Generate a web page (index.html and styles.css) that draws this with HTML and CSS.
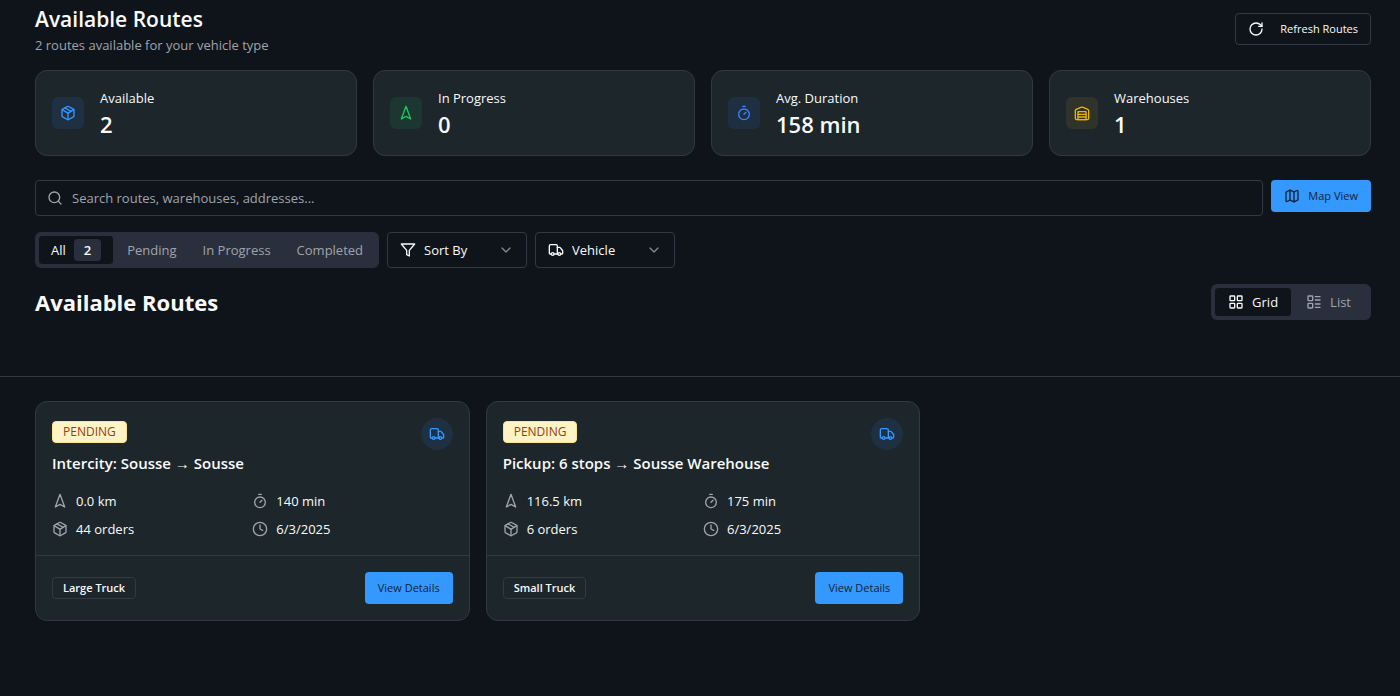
FILE: index.html
```html
<!DOCTYPE html>
<html lang="en">
<head>
<meta charset="utf-8">
<meta name="viewport" content="width=device-width, initial-scale=1">
<title>Available Routes</title>
<link rel="stylesheet" href="styles.css">
</head>
<body>
<svg class="sprite" aria-hidden="true">
  <symbol id="package" viewBox="0 0 24 24"><path d="M11 21.73a2 2 0 0 0 2 0l7-4A2 2 0 0 0 21 16V8a2 2 0 0 0-1-1.73l-7-4a2 2 0 0 0-2 0l-7 4A2 2 0 0 0 3 8v8a2 2 0 0 0 1 1.73z"/><path d="M12 22V12"/><path d="m3.3 7 7.703 4.734a2 2 0 0 0 1.994 0L20.7 7"/><path d="m7.5 4.27 9 5.15"/></symbol>
  <symbol id="navigation" viewBox="0 0 24 24"><path d="M12 2l7 19-7-4-7 4z"/></symbol>
  <symbol id="timer" viewBox="0 0 24 24"><path d="M10 2h4"/><path d="M12 14l3-3"/><circle cx="12" cy="14" r="8"/></symbol>
  <symbol id="clock" viewBox="0 0 24 24"><circle cx="12" cy="12" r="10"/><path d="M12 6v6l4 2"/></symbol>
  <symbol id="warehouse" viewBox="0 0 24 24"><path d="M22 8.35V20a2 2 0 0 1-2 2H4a2 2 0 0 1-2-2V8.35A2 2 0 0 1 3.26 6.5l8-3.2a2 2 0 0 1 1.48 0l8 3.2A2 2 0 0 1 22 8.35Z"/><path d="M6 18h12"/><path d="M6 14h12"/><rect width="12" height="12" x="6" y="10"/></symbol>
  <symbol id="refresh" viewBox="0 0 24 24"><path d="M21 12a9 9 0 1 1-9-9c2.52 0 4.93 1 6.74 2.74L21 8"/><path d="M21 3v5h-5"/></symbol>
  <symbol id="search" viewBox="0 0 24 24"><circle cx="11" cy="11" r="8"/><path d="m21 21-4.3-4.3"/></symbol>
  <symbol id="map" viewBox="0 0 24 24"><path d="M14.106 5.553a2 2 0 0 0 1.788 0l3.659-1.83A1 1 0 0 1 21 4.619v12.764a1 1 0 0 1-.553.894l-4.553 2.277a2 2 0 0 1-1.788 0l-4.212-2.106a2 2 0 0 0-1.788 0l-3.659 1.83A1 1 0 0 1 3 19.381V6.618a1 1 0 0 1 .553-.894l4.553-2.277a2 2 0 0 1 1.788 0z"/><path d="M15 5.764v15"/><path d="M9 3.236v15"/></symbol>
  <symbol id="filter" viewBox="0 0 24 24"><path d="M22 3H2l8 9.46V19l4 2v-8.54z"/></symbol>
  <symbol id="truck" viewBox="0 0 24 24"><path d="M14 18V6a2 2 0 0 0-2-2H4a2 2 0 0 0-2 2v11a1 1 0 0 0 1 1h2"/><path d="M15 18H9"/><path d="M19 18h2a1 1 0 0 0 1-1v-3.65a1 1 0 0 0-.22-.624l-3.48-4.35A1 1 0 0 0 17.52 8H14"/><circle cx="17" cy="18" r="2"/><circle cx="7" cy="18" r="2"/></symbol>
  <symbol id="chevron" viewBox="0 0 24 24"><path d="m6 9 6 6 6-6"/></symbol>
  <symbol id="grid" viewBox="0 0 24 24"><rect width="7" height="7" x="3" y="3" rx="1"/><rect width="7" height="7" x="14" y="3" rx="1"/><rect width="7" height="7" x="14" y="14" rx="1"/><rect width="7" height="7" x="3" y="14" rx="1"/></symbol>
  <symbol id="list" viewBox="0 0 24 24"><rect width="7" height="7" x="3" y="3" rx="1"/><rect width="7" height="7" x="3" y="14" rx="1"/><path d="M14 4h7"/><path d="M14 9h7"/><path d="M14 15h7"/><path d="M14 20h7"/></symbol>
</svg>

<header class="page-head">
  <div class="title-row">
    <div>
      <h1 class="page-title">Available Routes</h1>
      <p class="subtitle">2 routes available for your vehicle type</p>
    </div>
    <button class="btn btn-outline" type="button"><svg class="icon"><use href="#refresh"/></svg>Refresh Routes</button>
  </div>

  <section class="stats" aria-label="Route statistics">
    <div class="card stat">
      <span class="stat-icon blue"><svg class="icon"><use href="#package"/></svg></span>
      <div><p class="stat-label">Available</p><p class="stat-value">2</p></div>
    </div>
    <div class="card stat">
      <span class="stat-icon green"><svg class="icon"><use href="#navigation"/></svg></span>
      <div><p class="stat-label">In Progress</p><p class="stat-value">0</p></div>
    </div>
    <div class="card stat">
      <span class="stat-icon indigo"><svg class="icon"><use href="#timer"/></svg></span>
      <div><p class="stat-label">Avg. Duration</p><p class="stat-value">158 min</p></div>
    </div>
    <div class="card stat">
      <span class="stat-icon yellow"><svg class="icon"><use href="#warehouse"/></svg></span>
      <div><p class="stat-label">Warehouses</p><p class="stat-value">1</p></div>
    </div>
  </section>

  <div class="search-row">
    <label class="search"><svg class="icon"><use href="#search"/></svg><input class="search-input" type="text" aria-label="Search routes" placeholder="Search routes, warehouses, addresses..."></label>
    <button class="btn btn-primary btn-map" type="button"><svg class="icon"><use href="#map"/></svg>Map View</button>
  </div>

  <div class="filters">
    <div class="tabs" role="tablist" aria-label="Status">
      <button class="tab active" type="button" role="tab" aria-selected="true">All<span class="count">2</span></button>
      <button class="tab" type="button" role="tab">Pending</button>
      <button class="tab" type="button" role="tab">In Progress</button>
      <button class="tab" type="button" role="tab">Completed</button>
    </div>
    <label class="picker"><svg class="icon"><use href="#filter"/></svg><select class="picker-select" aria-label="Sort by"><option>Sort By</option></select><svg class="icon chevron"><use href="#chevron"/></svg></label>
    <label class="picker"><svg class="icon"><use href="#truck"/></svg><select class="picker-select" aria-label="Vehicle"><option>Vehicle</option></select><svg class="icon chevron"><use href="#chevron"/></svg></label>
  </div>

  <div class="section-row">
    <h2 class="section-title">Available Routes</h2>
    <div class="tabs view-tabs" role="tablist" aria-label="Layout">
      <button class="tab active" type="button" role="tab" aria-selected="true"><svg class="icon"><use href="#grid"/></svg>Grid</button>
      <button class="tab" type="button" role="tab"><svg class="icon"><use href="#list"/></svg>List</button>
    </div>
  </div>
</header>

<main class="routes">
  <article class="card route">
    <div class="route-head">
      <div>
        <span class="status">PENDING</span>
        <h3 class="route-title">Intercity: Sousse → Sousse</h3>
      </div>
      <span class="route-icon"><svg class="icon"><use href="#truck"/></svg></span>
    </div>
    <ul class="facts">
      <li class="fact"><svg class="icon"><use href="#navigation"/></svg>0.0 km</li>
      <li class="fact"><svg class="icon"><use href="#timer"/></svg>140 min</li>
      <li class="fact"><svg class="icon"><use href="#package"/></svg>44 orders</li>
      <li class="fact"><svg class="icon"><use href="#clock"/></svg>6/3/2025</li>
    </ul>
    <div class="route-foot"><span class="vehicle">Large Truck</span><button class="btn btn-primary" type="button">View Details</button></div>
  </article>
  <article class="card route">
    <div class="route-head">
      <div>
        <span class="status">PENDING</span>
        <h3 class="route-title">Pickup: 6 stops → Sousse Warehouse</h3>
      </div>
      <span class="route-icon"><svg class="icon"><use href="#truck"/></svg></span>
    </div>
    <ul class="facts">
      <li class="fact"><svg class="icon"><use href="#navigation"/></svg>116.5 km</li>
      <li class="fact"><svg class="icon"><use href="#timer"/></svg>175 min</li>
      <li class="fact"><svg class="icon"><use href="#package"/></svg>6 orders</li>
      <li class="fact"><svg class="icon"><use href="#clock"/></svg>6/3/2025</li>
    </ul>
    <div class="route-foot"><span class="vehicle">Small Truck</span><button class="btn btn-primary" type="button">View Details</button></div>
  </article>
</main>
</body>
</html>
```
FILE: styles.css
```css
:root {
  --bg: #0f141b;
  --card: #1c262b;
  --line: #323846;
  --muted: #2a2f3d;
  --muted-text: #a0a4ab;
  --text: #fafafa;
  --primary: #3399ff;
}

* { box-sizing: border-box; margin: 0; padding: 0; }

body {
  min-height: 100vh;
  background: var(--bg);
  color: var(--text);
  font: 13px/20px "Segoe UI", "Open Sans", "Noto Sans", sans-serif;
}

button, input, select { font: inherit; color: inherit; }
button { cursor: pointer; border: 0; background: none; }

.sprite { display: none; }

.icon {
  flex: none;
  width: 16px;
  height: 16px;
  fill: none;
  stroke: currentColor;
  stroke-width: 2;
  stroke-linecap: round;
  stroke-linejoin: round;
}

.page-head {
  display: flex;
  flex-direction: column;
  gap: 16px;
  padding: 3px 29px 56px 35px;
  border-bottom: 1px solid var(--line);
}

.title-row, .section-row {
  display: flex;
  align-items: center;
  justify-content: space-between;
}

.title-row { margin-bottom: -1px; }
.page-title { font-size: 21px; line-height: 32px; font-weight: 600; }
.subtitle { color: var(--muted-text); }

.btn {
  display: inline-flex;
  align-items: center;
  justify-content: center;
  height: 32px;
  padding: 0 13px;
  border-radius: 4px;
  font-size: 11px;
  font-weight: 400;
  white-space: nowrap;
}

.btn-outline { gap: 16px; padding: 0 12px; border: 1px solid var(--line); }
.btn-primary { background: var(--primary); color: #142235; }
.btn-map { gap: 8px; }

.card {
  background: var(--card);
  border: 1px solid var(--line);
  border-radius: 12px;
}

.stats {
  display: grid;
  grid-template-columns: repeat(4, 1fr);
  gap: 16px;
  margin-bottom: 8px;
}

.stat { display: flex; align-items: center; gap: 16px; padding: 16px; }
.stat-icon { display: flex; padding: 8px; border-radius: 6px; }
.stat-label { line-height: 22px; }
.stat-value { font-size: 22px; line-height: 30px; font-weight: 600; }
.blue { color: #3399ff; background: #1f3042; }
.green { color: #22c55e; background: #1c3631; }
.indigo { color: #3b82f6; background: #1f2f41; }
.yellow { color: #eab308; background: #303329; }

.search-row { display: flex; gap: 8px; align-items: flex-start; }

.search {
  flex: 1;
  display: flex;
  align-items: center;
  gap: 9px;
  height: 36px;
  padding: 0 11px;
  border: 1px solid var(--line);
  border-radius: 4px;
  color: var(--muted-text);
}

.search-input { flex: 1; min-width: 0; border: 0; outline: 0; background: none; color: var(--text); }
.search-input::placeholder { color: var(--muted-text); opacity: 1; }

.filters { display: flex; gap: 8px; }

.tabs {
  display: flex;
  padding: 3px;
  height: 36px;
  background: var(--muted);
  border-radius: 6px;
  color: var(--muted-text);
}

.tab {
  display: flex;
  align-items: center;
  gap: 8px;
  padding: 0 12px;
  border: 1px solid transparent;
  border-radius: 4px;
}

.tab.active { background: var(--bg); border-color: var(--muted); color: var(--text); }
.view-tabs .tab { padding: 0 13px; }
.view-tabs .tab:last-child { padding-right: 16px; }

.count {
  padding: 0 10px;
  line-height: 22px;
  border-radius: 4px;
  background: var(--muted);
  font-size: 13px;
  font-weight: 600;
}

.picker {
  display: flex;
  align-items: center;
  gap: 8px;
  width: 140px;
  height: 36px;
  padding: 0 12px;
  border: 1px solid var(--line);
  border-radius: 4px;
}

.picker-select { flex: 1; min-width: 0; appearance: none; border: 0; outline: 0; background: none; }
.chevron { opacity: .5; }

.section-title { font-size: 22px; line-height: 32px; font-weight: 700; }

.routes {
  display: grid;
  grid-template-columns: repeat(auto-fill, minmax(400px, 1fr));
  gap: 16px;
  padding: 24px 29px 24px 35px;
}

.route-head { display: flex; justify-content: space-between; align-items: flex-start; padding: 16px 16px 0; }

.status, .vehicle {
  display: block;
  width: fit-content;
  padding: 0 10px;
  border: 1px solid var(--line);
  border-radius: 4px;
  font-size: 11px;
  line-height: 20px;
  font-weight: 600;
}

.status { margin-top: 3px; border-color: #fde68a; background: #fef3c7; color: #92400e; font-size: 12px; font-weight: 500; }
.route-title { margin-top: 8px; font-size: 15px; line-height: 24px; font-weight: 600; }
.route-icon { display: flex; padding: 8px; border-radius: 50%; background: #1f3042; color: var(--primary); }

.facts {
  display: grid;
  grid-template-columns: 1fr 1fr;
  row-gap: 8px;
  padding: 16px;
  list-style: none;
}

.fact { display: flex; align-items: center; gap: 8px; }
.fact .icon { color: var(--muted-text); }

.route-foot {
  display: flex;
  align-items: center;
  justify-content: space-between;
  padding: 16px;
  border-top: 1px solid var(--line);
}
```
